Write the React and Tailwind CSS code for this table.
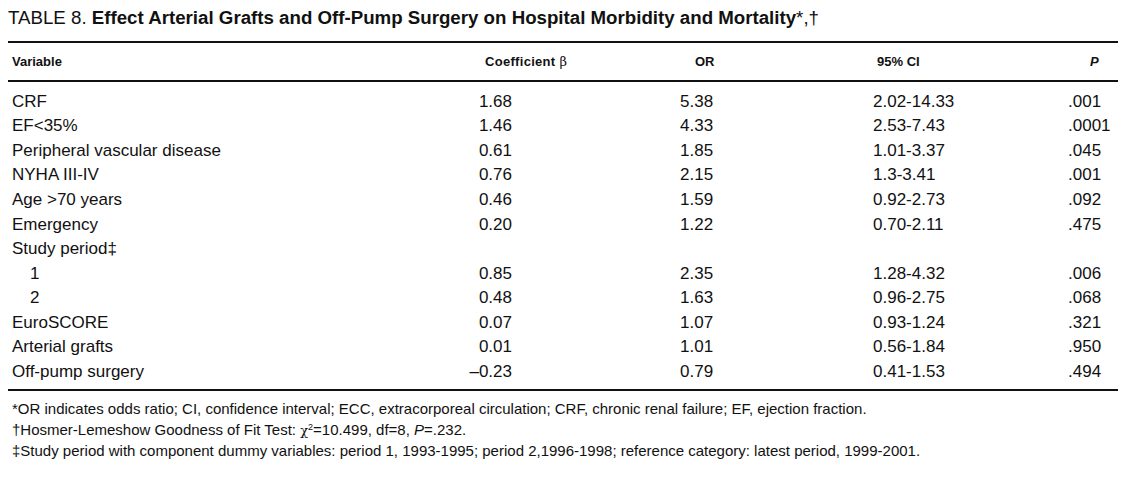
import React from 'react';

const rows = [
  { v: 'CRF', b: '1.68', or: '5.38', ci: '2.02-14.33', p: '.001' },
  { v: 'EF<35%', b: '1.46', or: '4.33', ci: '2.53-7.43', p: '.0001' },
  { v: 'Peripheral vascular disease', b: '0.61', or: '1.85', ci: '1.01-3.37', p: '.045' },
  { v: 'NYHA III-IV', b: '0.76', or: '2.15', ci: '1.3-3.41', p: '.001' },
  { v: 'Age >70 years', b: '0.46', or: '1.59', ci: '0.92-2.73', p: '.092' },
  { v: 'Emergency', b: '0.20', or: '1.22', ci: '0.70-2.11', p: '.475' },
  { v: 'Study period\u2021' },
  { v: '1', sub: true, b: '0.85', or: '2.35', ci: '1.28-4.32', p: '.006' },
  { v: '2', sub: true, b: '0.48', or: '1.63', ci: '0.96-2.75', p: '.068' },
  { v: 'EuroSCORE', b: '0.07', or: '1.07', ci: '0.93-1.24', p: '.321' },
  { v: 'Arterial grafts', b: '0.01', or: '1.01', ci: '0.56-1.84', p: '.950' },
  { v: 'Off-pump surgery', b: '\u20130.23', or: '0.79', ci: '0.41-1.53', p: '.494' },
];

export default function App() {
  return (
    <div className="w-[1135px] h-[490px] bg-white text-[#111] font-['Liberation_Sans',Arial,sans-serif]">
      <div className="pl-[8px] pt-[6px] text-[18.7px] leading-[24px]">
        TABLE 8. <span className="font-bold">Effect Arterial Grafts and Off-Pump Surgery on Hospital Morbidity and Mortality</span>*,†
      </div>

      <div className="ml-[8px] w-[1110px] mt-[11px]">
        <div className="h-[2px] bg-[#111]" />
        <div className="flex h-[37px] items-center text-[13px] font-bold">
          <div className="w-[424px] pl-[4px]">Variable</div>
          <div className="w-[180px] pl-[53px] tracking-[0.3px]">
            Coefficient <span className="font-normal font-['DejaVu_Serif',serif] text-[13px]">β</span>
          </div>
          <div className="w-[261px] pl-[83px]">OR</div>
          <div className="w-[175px] pl-[4px]">95% CI</div>
          <div className="flex-1 pl-[42px] italic">P</div>
        </div>
        <div className="h-[2px] bg-[#111]" />

        <div className="pt-[7px] text-[17px]">
          {rows.map((r) => (
            <div key={r.v} className="flex h-[24.6px] items-center">
              <div className={`w-[424px] ${r.sub ? 'pl-[22px]' : 'pl-[4px]'}`}>{r.v}</div>
              <div className="w-[80px] text-right">{r.b}</div>
              <div className="w-[361px] pl-[168px]">{r.or}</div>
              <div className="w-[195px]">{r.ci}</div>
              <div className="flex-1">{r.p}</div>
            </div>
          ))}
        </div>

        <div className="mt-[5px] h-[2px] bg-[#111]" />

        <div className="pt-[8px] pl-[4px] text-[15px] leading-[20.5px]">
          <div>*OR indicates odds ratio; CI, confidence interval; ECC, extracorporeal circulation; CRF, chronic renal failure; EF, ejection fraction.</div>
          <div>
            †Hosmer-Lemeshow Goodness of Fit Test: <span className="font-['DejaVu_Serif',serif] text-[13px]">χ</span>
            <sup className="text-[9px]">2</sup>=10.499, df=8, <span className="italic">P</span>=.232.
          </div>
          <div>‡Study period with component dummy variables: period 1, 1993-1995; period 2,1996-1998; reference category: latest period, 1999-2001.</div>
        </div>
      </div>
    </div>
  );
}
